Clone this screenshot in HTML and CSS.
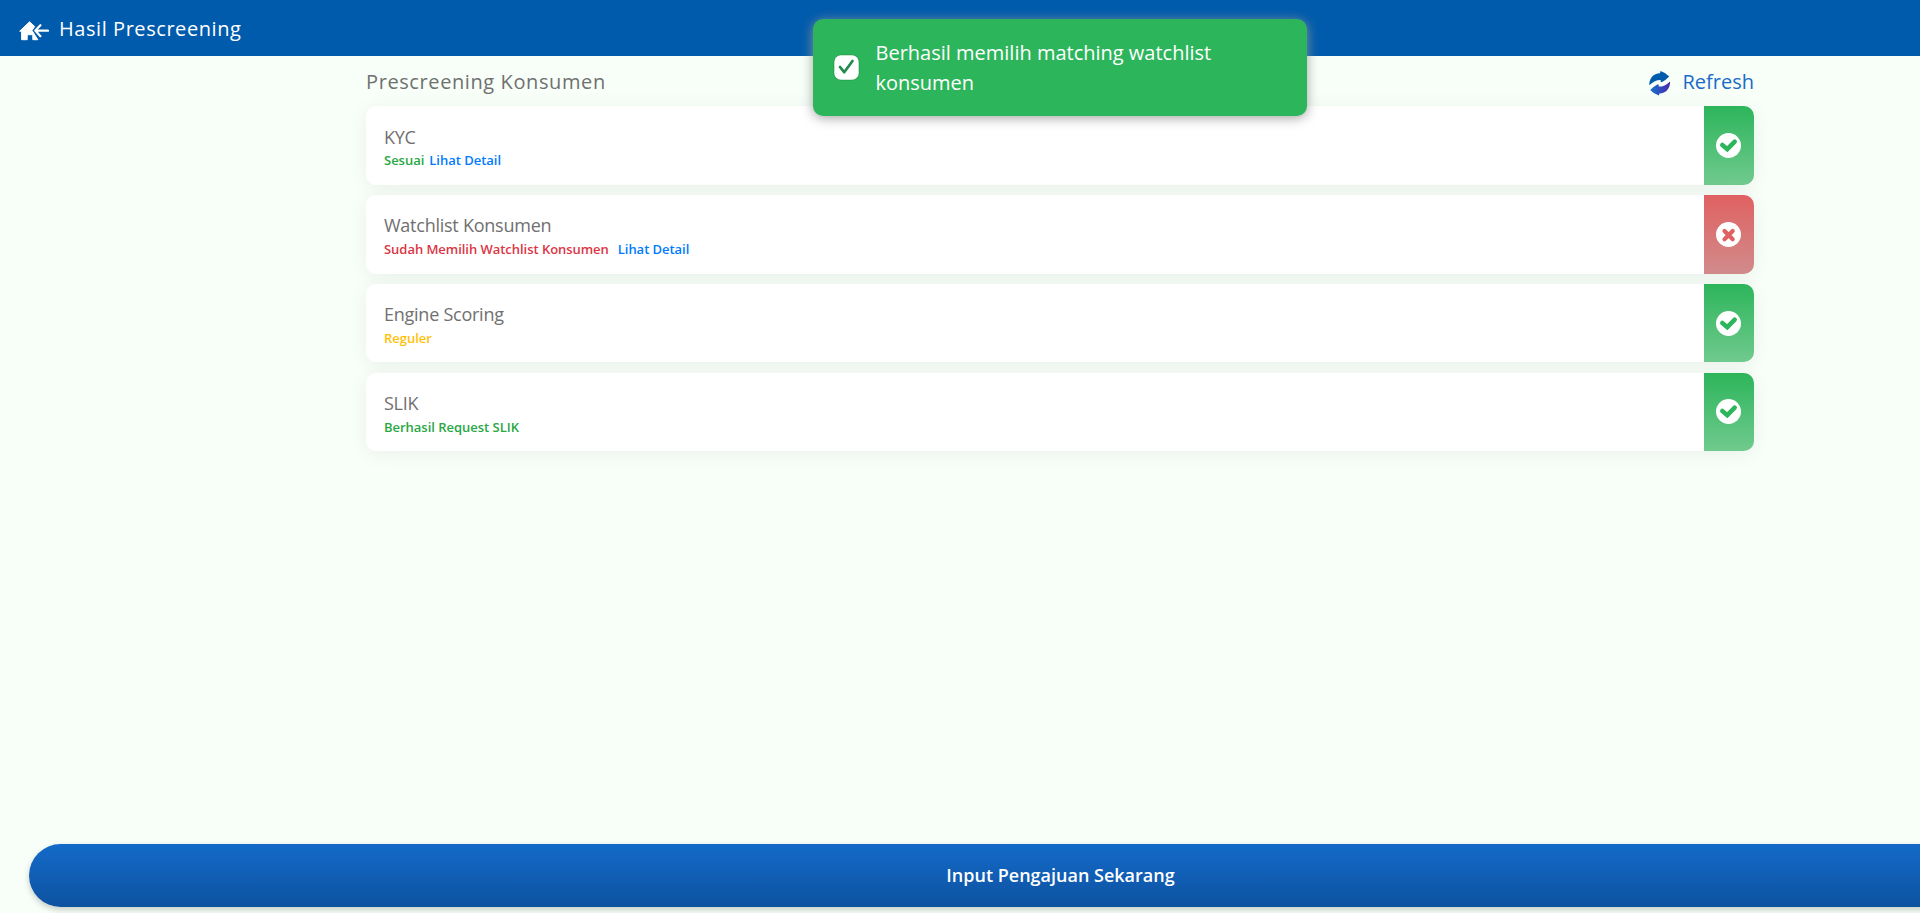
FILE: index.html
```html
<!DOCTYPE html>
<html lang="id">
<head>
<meta charset="utf-8">
<title>Hasil Prescreening</title>
<link rel="stylesheet" href="styles.css">
</head>
<body>
<svg class="defs" width="0" height="0" aria-hidden="true">
  <symbol id="check" viewBox="0 0 25 25"><circle cx="12.500" cy="12.500" r="12.500" fill="#fff"/><path d="M6.300 12l5 4.200 7.400-7.500" fill="none" stroke="#2db55b" stroke-width="4.500" stroke-linecap="round" stroke-linejoin="miter"/></symbol>
  <symbol id="cross" viewBox="0 0 25 25"><circle cx="12.500" cy="12.500" r="12.500" fill="#fff"/><path d="M8.500 9l8.200 8.200M16.700 9l-8.200 8.200" fill="none" stroke="#e06161" stroke-width="4.200" stroke-linecap="round"/></symbol>
</svg>
<div class="page">
  <header class="topbar">
    <svg class="home" width="30" height="20" viewBox="0 0 30 20" fill="none">
      <path fill="#fff" stroke="#fff" stroke-width="1" stroke-linejoin="round" d="M.7 10.200L10.500.8l5.200 4.700-2.700 3.900 5.800 9.300h-5v-5H8.200v5H2.600v-8.500z"/>
      <path stroke="#fff" stroke-width="2.200" stroke-linecap="round" stroke-linejoin="round" d="M21.400 4.200L16.300 9.400l5.100 5.800M17 9.700h12"/>
    </svg>
    <h1 class="title">Hasil Prescreening</h1>
  </header>
  <main class="content">
    <div class="heading">
      <h2 class="subtitle">Prescreening Konsumen</h2>
      <a class="refresh">
        <svg width="22" height="25" viewBox="0 0 22 25">
          <defs><linearGradient id="swirl" x1="1" x2="0"><stop offset="0" stop-color="#1472cc"/><stop offset="1" stop-color="#4a28ad"/></linearGradient></defs>
          <path fill="#005bac" d="M.3 14.200C.2 7.300 4.300 2.500 11 2.200L11.500 0Q16.500 1.500 20.200 5.500 17 9 12.600 11.300 10.800 11 11.800 9 6 8.800.3 14.200z"/>
          <path fill="url(#swirl)" transform="rotate(180 10.700 12.300)" d="M.3 14.200C.2 7.300 4.300 2.500 11 2.200L11.500 0Q16.500 1.500 20.200 5.500 17 9 12.600 11.300 10.800 11 11.800 9 6 8.800.3 14.200z"/>
        </svg>
        <span>Refresh</span>
      </a>
    </div>
    <div class="cards">
      <section class="card">
        <div class="info"><h3 class="name">KYC</h3><p class="status"><span class="green">Sesuai</span><a class="link">Lihat Detail</a></p></div>
        <div class="state ok"><svg><use href="#check"/></svg></div>
      </section>
      <section class="card">
        <div class="info"><h3 class="name">Watchlist Konsumen</h3><p class="status wide"><span class="red">Sudah Memilih Watchlist Konsumen</span><a class="link">Lihat Detail</a></p></div>
        <div class="state bad"><svg><use href="#cross"/></svg></div>
      </section>
      <section class="card">
        <div class="info"><h3 class="name">Engine Scoring</h3><p class="status"><span class="yellow">Reguler</span></p></div>
        <div class="state ok"><svg><use href="#check"/></svg></div>
      </section>
      <section class="card">
        <div class="info"><h3 class="name">SLIK</h3><p class="status"><span class="green">Berhasil Request SLIK</span></p></div>
        <div class="state ok"><svg><use href="#check"/></svg></div>
      </section>
    </div>
  </main>
  <button class="submit">Input Pengajuan Sekarang</button>
  <div class="toast">
    <svg width="27" height="27" viewBox="0 0 27 27">
      <rect x=".5" y=".5" width="26" height="26" rx="7.500" fill="#269b4e"/>
      <rect x="1.300" y="1.300" width="24.400" height="24.400" rx="6.500" fill="#fff"/>
      <path d="M7 13l4.200 5.200L19.500 7" fill="none" stroke="#23894c" stroke-width="2.700" stroke-linecap="round" stroke-linejoin="round"/>
    </svg>
    <p class="message">Berhasil memilih matching watchlist konsumen</p>
  </div>
</div>
</body>
</html>
```
FILE: styles.css
```css
* { box-sizing: border-box; }
body, h1, h2, h3, p { margin: 0; }
body { font-family: "Open Sans", sans-serif; background: #f8fff8; overflow: hidden; }
.defs { position: absolute; }
.page { height: 913px; display: flex; flex-direction: column; position: relative; overflow: hidden; }
.topbar { height: 56px; flex: none; background: #005bac; color: #fff; display: flex; align-items: center; padding-left: 19px; gap: 10px; }
.home { margin-top: 6px; }
.title { font-size: 20px; font-weight: 500; letter-spacing: .56px; line-height: 30px; margin-top: 2px; }
.content { width: 1388px; margin-left: 366px; flex: 1; }
.heading { height: 50px; padding-top: 2px; display: flex; justify-content: space-between; align-items: center; }
.subtitle { font-size: 20px; font-weight: 500; color: #707070; letter-spacing: .6px; line-height: 30px; }
.refresh { display: flex; align-items: center; gap: 11px; font-size: 20px; line-height: 30px; color: #1a6bc7; }
.refresh svg { margin-top: 2px; }
.cards { display: flex; flex-direction: column; gap: 10.25px; }
.card { height: 78.65px; display: flex; background: #fff; border-radius: 10px; box-shadow: 0 3px 20px rgba(0, 0, 0, .06); }
.info { flex: 1; padding: 17.55px 18px 0; }
.name { font-size: 18px; font-weight: 400; line-height: 27px; letter-spacing: -.25px; color: #707070; }
.status { display: flex; gap: 5px; font-size: 13px; font-weight: 600; line-height: 20px; letter-spacing: -.02px; margin-top: -.6px; }
.status.wide { gap: 9px; letter-spacing: -.04px; }
.green { color: #28a745; }
.red { color: #dc3545; }
.yellow { color: #ffc107; }
.link { color: #007bff; }
.state { width: 50px; display: flex; align-items: center; justify-content: center; border-radius: 0 10px 10px 0; padding-right: 1px; }
.state svg { width: 25px; height: 25px; }
.ok { background: linear-gradient(#2db55b, #70ca8e); }
.bad { background: linear-gradient(#e06161, #d18b8b); }
.submit { flex: none; width: 2063px; height: 63px; margin: 0 0 6px 29px; padding: 0; border: 0; border-radius: 32px; background: linear-gradient(#146ac9, #0d52a0); box-shadow: 0 3px 6px rgba(0, 0, 0, .2); color: #fff; font: 600 18px/27px "Open Sans", sans-serif; }
.toast { position: absolute; left: 813px; top: 19px; width: 494px; height: 97px; display: flex; align-items: center; gap: 15.5px; padding: 0 20px; border-radius: 10px; background: #2db55b; box-shadow: 0 2px 12px rgba(153, 153, 153, .9); color: #fff; }
.toast svg { flex: none; }
.message { font-size: 20px; line-height: 30px; width: 350px; }
```
